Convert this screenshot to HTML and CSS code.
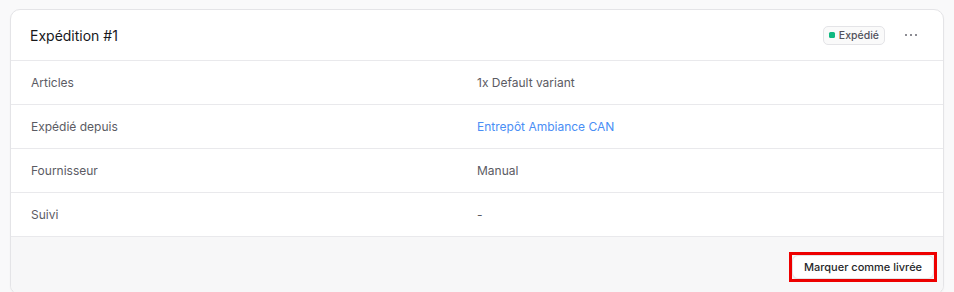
FILE: index.html
```html
<!DOCTYPE html>
<html lang="fr">
<head>
  <meta charset="UTF-8" />
  <meta name="viewport" content="width=device-width, initial-scale=1.0"/>
  <title>Expédition #1</title>
  <link rel="stylesheet" href="styles.css">
</head>
<body>
  <div class="card">
    <div class="card-header">
      <h2>Expédition #1</h2>
      <div class="header-actions">
        <span class="badge"><span class="dot"></span>Expédié</span>
        <button class="more" aria-label="Plus">
          <svg width="14" height="4" viewBox="0 0 14 4"><circle cx="2" cy="2" r="1.1" fill="#71717a"/><circle cx="7" cy="2" r="1.1" fill="#71717a"/><circle cx="12" cy="2" r="1.1" fill="#71717a"/></svg>
        </button>
      </div>
    </div>
    <div class="row">
      <span class="label">Articles</span>
      <span class="value">1x Default variant</span>
    </div>
    <div class="row">
      <span class="label">Expédié depuis</span>
      <a class="value link" href="#">Entrepôt Ambiance CAN</a>
    </div>
    <div class="row">
      <span class="label">Fournisseur</span>
      <span class="value">Manual</span>
    </div>
    <div class="row">
      <span class="label">Suivi</span>
      <span class="value">-</span>
    </div>
    <div class="card-footer">
      <span class="highlight">
        <button class="action">Marquer comme livrée</button>
      </span>
    </div>
  </div>
</body>
</html>
```

FILE: styles.css
```css
body {
  margin: 0;
  padding: 9px 10px 0 10px;
  background: #f9f9fa;
  font-family: Inter, "Noto Sans", sans-serif;
  color: #18181b;
}
.card {
  background: #fff;
  border: 1px solid #e4e4e7;
  border-radius: 10px;
  box-shadow: 0 1px 2px rgba(0,0,0,0.04);
  overflow: hidden;
}
.card-header {
  height: 50px;
  display: flex;
  align-items: center;
  justify-content: space-between;
  padding: 0 21px 0 19px;
  border-bottom: 1px solid #e9e9ec;
}
.card-header h2 {
  margin: 0;
  font-size: 14px;
  font-weight: 400;
  color: #18181b;
}
.header-actions {
  display: flex;
  align-items: center;
  gap: 15px;
}
.badge {
  display: inline-flex;
  align-items: center;
  gap: 4px;
  height: 17px;
  padding: 0 5px;
  border: 1px solid #e4e4e7;
  border-radius: 5px;
  background: #fafafa;
  font-size: 10.5px;
  font-weight: 500;
  color: #52525b;
}
.dot {
  width: 6px;
  height: 6px;
  border-radius: 1.5px;
  background: #10b981;
}
.more {
  background: none;
  border: none;
  padding: 4px;
  display: flex;
  cursor: pointer;
}
.row {
  display: grid;
  grid-template-columns: 1fr 1fr;
  align-items: center;
  height: 43px;
  padding: 0 20px;
  border-bottom: 1px solid #e9e9ec;
  font-size: 12px;
}
.label {
  color: #5b5b63;
}
.value {
  color: #5b5b63;
}
.link {
  color: #4a8ef5;
  text-decoration: none;
}
.card-footer {
  background: #f7f7f8;
  display: flex;
  justify-content: flex-end;
  align-items: flex-start;
  padding: 15px 6px 12px;
  height: 30px;
}
.highlight {
  display: flex;
  border: 3px solid #ee0000;
}
.action {
  font-family: inherit;
  font-size: 11px;
  font-weight: 500;
  color: #27272a;
  background: #fff;
  border: 1px solid #e4e4e7;
  border-radius: 6px;
  padding: 0 10px;
  width: 142px;
  height: 24px;
  box-shadow: 0 1px 1px rgba(0,0,0,0.05);
}
```
